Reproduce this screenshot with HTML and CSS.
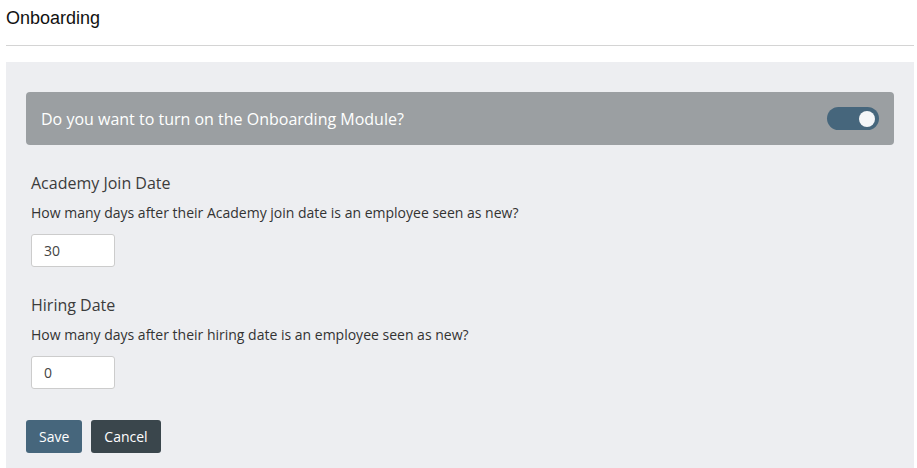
FILE: index.html
```html
<!DOCTYPE html>
<html>
<head>
<meta charset="utf-8">
<link rel="stylesheet" href="styles.css">
</head>
<body>
<div class="page">
  <h1 class="title">Onboarding</h1>
  <hr class="rule">
  <div class="panel">
    <div class="banner">
      <span class="banner-text">Do you want to turn on the Onboarding Module?</span>
      <span class="toggle"><span class="knob"></span></span>
    </div>
    <div class="field">
      <div class="label">Academy Join Date</div>
      <div class="help">How many days after their Academy join date is an employee seen as new?</div>
      <input class="num" type="text" value="30">
    </div>
    <div class="field">
      <div class="label">Hiring Date</div>
      <div class="help">How many days after their hiring date is an employee seen as new?</div>
      <input class="num" type="text" value="0">
    </div>
    <div class="actions">
      <button class="btn save">Save</button>
      <button class="btn cancel">Cancel</button>
    </div>
  </div>
</div>
</body>
</html>
```
FILE: styles.css
```css
html, body { margin: 0; padding: 0; background: #fff; }
body { font-family: "Open Sans", sans-serif; }
.page { padding: 0 3px 0 6px; }
.title {
  font-family: "Liberation Sans", Arial, sans-serif;
  font-weight: normal;
  font-size: 18px;
  color: #111;
  margin: 0;
  padding-top: 8px;
  line-height: 21px;
}
.rule {
  border: 0;
  border-top: 1px solid #d4d4d4;
  margin: 16px 0 16px 0;
}
.panel {
  background: #edeef1;
  padding: 30px 20px 15px 20px;
  height: 406px;
  box-sizing: border-box;
}
.banner {
  background: #9b9fa2;
  border-radius: 4px;
  height: 53px;
  display: flex;
  align-items: center;
  justify-content: space-between;
  padding: 0 15px 0 15px;
}
.banner-text { color: #fff; font-size: 16px; }
.toggle {
  width: 52px; height: 23px;
  background: #46667c;
  border-radius: 12px;
  display: flex; align-items: center; justify-content: flex-end;
  padding-right: 4px; box-sizing: border-box;
}
.knob { width: 16px; height: 16px; border-radius: 50%; background: #f4f6f8; }
.field { padding-left: 5px; }
.label { font-size: 16px; color: #3c3c3c; margin-top: 27px; line-height: 22px; }
.help { font-size: 14px; color: #333; margin-top: 9px; line-height: 19px; }
.num {
  display: block;
  margin-top: 12px;
  width: 84px; height: 33px; box-sizing: border-box;
  border: 1px solid #ccc; border-radius: 3px;
  background: #fff;
  font-family: "Open Sans", sans-serif; font-size: 14px; color: #444;
  padding: 0 12px;
}
.actions { display: flex; gap: 9px; margin-top: 31px; }
.btn {
  border: 0; border-radius: 3px; height: 33px; color: #fff;
  font-family: "Open Sans", sans-serif; font-size: 14px; padding: 0 13px;
}
.save { background: #46667c; }
.cancel { background: #3a464c; }
```
